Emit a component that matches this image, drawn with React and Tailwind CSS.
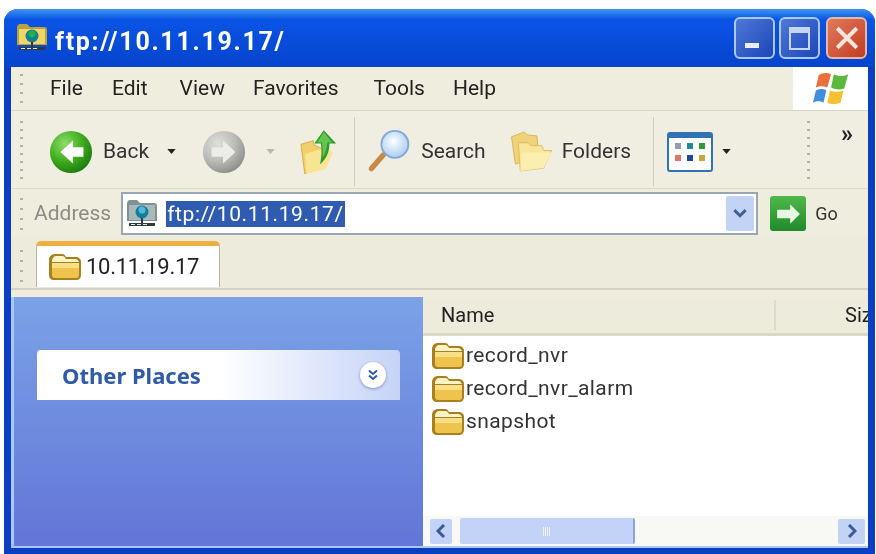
import React from "react";

const Grip = ({ className }) => (
  <div className={`flex flex-col justify-between w-[3px] ${className}`}>
    {[0, 1, 2, 3, 4, 5, 6, 7].map((i) => (
      <span key={i} className="block w-[3px] h-[2px] bg-[#b5b2a4]" />
    ))}
  </div>
);

const ShortGrip = ({ className }) => (
  <div className={`flex flex-col justify-between w-[3px] ${className}`}>
    {[0, 1, 2, 3].map((i) => (
      <span key={i} className="block w-[3px] h-[2px] bg-[#b5b2a4]" />
    ))}
  </div>
);

const Folder = ({ className }) => (
  <svg viewBox="0 0 32 28" className={className}>
    <path d="M0 7c0-4 3-6 6-6h7c2 0 3 1 4 3h9c4 0 6 2 6 5v13c0 3-2 5-5 5H5c-3 0-5-2-5-5z" fill="#a8801f" />
    <path d="M3 8c0-3 2-5 4-5h6c2 0 3 1 4 3h9c2 0 3 1 4 3H3z" fill="#fdf3c4" />
    <path d="M3 10h27v12c0 2-1 3-3 3H6c-2 0-3-1-3-3z" fill="#eec44e" />
    <path d="M3 10h27v5H3z" fill="#f8df86" />
  </svg>
);

const NetFolder = ({ className, gray }) => (
  <svg viewBox="0 0 32 32" className={className}>
    <path d="M1 6c0-2 1-4 3-4h7l3 3h14c2 0 3 1 3 3v15H1z" fill={gray ? "#7f9292" : "#b9a23c"} />
    <path d="M3 7h26v15H3z" fill={gray ? "#a9b9b9" : "#f0d765"} />
    <circle cx="16" cy="14" r="6.5" fill="#0f7f9a" />
    <circle cx="16" cy="12" r="3.5" fill={gray ? "#57b5e0" : "#25b04a"} />
    <path d="M15 20h2v5h-2z" fill="#334" />
    <path d="M3 25h26v3H3z" fill="#2f3c3a" />
    <path d="M5 26h4v1H5zm6 0h4v1h-4zm6 0h4v1h-4z" fill="#dfe6e6" />
  </svg>
);

const NavArrow = ({ green }) => (
  <svg viewBox="0 0 46 46" className="w-[44px] h-[44px]">
    <defs>
      <radialGradient id={green ? "gb" : "gf"} cx="35%" cy="30%" r="75%">
        <stop offset="0%" stopColor={green ? "#8fdc6a" : "#dededc"} />
        <stop offset="55%" stopColor={green ? "#3fae1e" : "#bcbcb8"} />
        <stop offset="100%" stopColor={green ? "#1c7a10" : "#8c8c88"} />
      </radialGradient>
    </defs>
    <circle cx="23" cy="23" r="22" fill={`url(#${green ? "gb" : "gf"})`} />
    {green ? (
      <path d="M25 11 12 23l13 12v-7h11V18H25z" fill="#fff" />
    ) : (
      <path d="M22 11 35 23 22 35v-7H10V18h12z" fill="#ecece8" />
    )}
  </svg>
);

const Caret = ({ className }) => (
  <svg viewBox="0 0 10 6" className={className}>
    <path d="M0 0h10L5 6z" fill="currentColor" />
  </svg>
);

const Search = () => (
  <svg viewBox="0 0 52 50" className="w-[47px] h-[45px]">
    <defs>
      <radialGradient id="lens" cx="45%" cy="40%" r="60%">
        <stop offset="0%" stopColor="#ffffff" />
        <stop offset="100%" stopColor="#a9cdf0" />
      </radialGradient>
    </defs>
    <path d="M6 44 19 29" stroke="#c98a45" strokeWidth="6" strokeLinecap="round" />
    <circle cx="32" cy="17" r="15" fill="url(#lens)" stroke="#7ea8d8" strokeWidth="2" />
  </svg>
);

const Folders = () => (
  <svg viewBox="0 0 44 42" className="w-[44px] h-[41px]">
    <path d="M1 6 14 1l3 3 10 1 2 20-24 9z" fill="#f0d27a" stroke="#d9b452" />
    <path d="M8 12h10l3 3h11l2 5h8L34 38 10 41z" fill="#f8e69a" stroke="#dcbc5c" />
    <path d="M12 22h30l-8 16-24 3z" fill="#fbeeb0" />
  </svg>
);

const UpFolder = () => (
  <svg viewBox="0 0 40 48" className="w-[38px] h-[46px]">
    <path d="M1 16 14 12v4l12 6v14L5 47z" fill="#f2cf68" stroke="#d4ad4a" />
    <path d="M5 26l20-6 10 4-8 18-20 5z" fill="#f8e594" />
    <path d="M25 1 38 15h-7c0 9-3 16-10 22 2-8 2-15 1-22h-7z" fill="#2e9b2a" />
    <path d="M25 3 34 14h-5c-1 6-2 11-5 16 0-6 0-11-1-16h-5z" fill="#63c44f" />
  </svg>
);

const Views = () => (
  <svg viewBox="0 0 46 40" className="w-[46px] h-[40px]">
    <rect x="1" y="1" width="44" height="38" rx="2" fill="#fdfdff" stroke="#2f73b4" strokeWidth="2" />
    <rect x="1" y="1" width="44" height="5" fill="#2f73b4" />
    <rect x="8" y="11" width="6" height="6" fill="#9a9aac" />
    <rect x="20" y="11" width="6" height="6" fill="#1f8a9a" />
    <rect x="32" y="11" width="6" height="6" fill="#2f9a3a" />
    <rect x="8" y="23" width="6" height="6" fill="#e0786a" />
    <rect x="20" y="23" width="6" height="6" fill="#1f4a9a" />
    <rect x="32" y="23" width="6" height="6" fill="#c9a83a" />
  </svg>
);

const Flag = () => (
  <svg viewBox="0 0 40 36" className="w-[38px] h-[35px]">
    <path d="M6 4c4-3 9-3 13-1l-4 14c-4-2-8-2-12 0z" fill="#e8703a" />
    <path d="M22 3c4 2 9 3 15 0l-4 15c-5 2-10 1-14-1z" fill="#5cb83c" />
    <path d="M3 20c4-2 8-2 11 0l-3 13c-4-2-7-2-11 0z" fill="#3f8fdc" />
    <path d="M18 20c4 2 9 2 14 0l-3 13c-5 2-10 2-14 0z" fill="#f2c230" />
  </svg>
);

export default function App() {
  return (
    <div className="w-[876px] h-[554px] bg-white pt-[9px] pl-[4px] pr-px overflow-hidden blur-[0.6px] font-['Roboto',sans-serif]">
      <div className="h-full flex flex-col rounded-t-[14px] bg-[#0a3fc4] px-[7px] pb-[6px]">
        {/* title bar */}
        <div className="h-[58px] -mx-[7px] shrink-0 rounded-t-[14px] bg-gradient-to-b from-[#3f94f2] via-[#0a54e6] via-[18%] to-[#0644cc] flex items-center pl-[12px] pr-[8px]">
          <NetFolder className="w-[32px] h-[32px]" />
          <span className="ml-[7px] mt-[6px] text-white font-bold text-[25px] tracking-[1.7px] leading-none">ftp://10.11.19.17/</span>
          <div className="ml-auto flex gap-[4px] items-center">
            <div className="w-[41px] h-[42px] rounded-[6px] border-2 border-[#a9c8f2] bg-gradient-to-br from-[#4f78d8] to-[#1d45b8] flex items-end pl-[9px] pb-[9px]">
              <span className="block w-[14px] h-[5px] bg-[#e8eefc]" />
            </div>
            <div className="w-[41px] h-[42px] rounded-[6px] border-2 border-[#a9c8f2] bg-gradient-to-br from-[#4f78d8] to-[#1d45b8] flex items-center justify-center">
              <span className="block w-[21px] h-[23px] border-2 border-t-[6px] border-[#c6d6f6]" />
            </div>
            <div className="ml-[2px] w-[41px] h-[42px] rounded-[6px] border-2 border-[#e6b8a8] bg-gradient-to-br from-[#e07a5c] to-[#c23a1e] flex items-center justify-center">
              <svg viewBox="0 0 24 24" className="w-[26px] h-[26px]">
                <path d="M3 3l18 18M21 3 3 21" stroke="#fbe6df" strokeWidth="3.6" />
              </svg>
            </div>
          </div>
        </div>

        {/* menu */}
        <div className="h-[44px] shrink-0 flex bg-[#efedde] border-b border-[#d8d5c4]">
          <ShortGrip className="ml-[9px] my-[7px]" />
          <div className="flex items-center text-[21px] text-[#222] pl-[27px] flex-1">
            <span>File</span>
            <span className="ml-[29px]">Edit</span>
            <span className="ml-[32px]">View</span>
            <span className="ml-[28px]">Favorites</span>
            <span className="ml-[35px]">Tools</span>
            <span className="ml-[28px]">Help</span>
          </div>
          <div className="w-[75px] bg-white flex items-center justify-center pl-[2px]">
            <Flag />
          </div>
        </div>

        {/* toolbar */}
        <div className="h-[78px] shrink-0 flex items-center bg-[#f0eee0] border-b border-[#dedbca] pt-[4px]">
          <Grip className="ml-[9px] h-[58px] -mt-[4px]" />
          <div className="ml-[26px]"><NavArrow green /></div>
          <span className="ml-[10px] text-[21px] text-[#333]">Back</span>
          <Caret className="ml-[18px] w-[9px] h-[5px] text-[#222]" />
          <div className="ml-[26px]"><NavArrow /></div>
          <Caret className="ml-[20px] w-[9px] h-[5px] text-[#b8b8b0]" />
          <div className="ml-[25px]"><UpFolder /></div>
          <div className="ml-[16px] w-px self-stretch my-[2px] bg-[#d0cdbc]" />
          <div className="ml-[11px]"><Search /></div>
          <span className="ml-[8px] text-[21px] text-[#333]">Search</span>
          <div className="ml-[24px]"><Folders /></div>
          <span className="ml-[8px] text-[21px] text-[#333]">Folders</span>
          <div className="ml-[22px] w-px self-stretch my-[2px] bg-[#d0cdbc]" />
          <div className="ml-[13px]"><Views /></div>
          <Caret className="ml-[9px] w-[9px] h-[5px] text-[#222]" />
          <Grip className="ml-[76px] h-[58px] -mt-[4px]" />
          <span className="ml-[31px] self-start mt-[7px] text-[24px] font-bold leading-none text-[#222]">»</span>
        </div>

        {/* address */}
        <div className="h-[47px] shrink-0 flex items-center bg-[#efedde] pt-[2px]">
          <ShortGrip className="ml-[9px] h-[32px]" />
          <span className="ml-[11px] text-[21px] text-[#8c8c84]">Address</span>
          <div className="ml-[10px] w-[637px] h-[43px] bg-white border-2 border-[#9aa6b4] flex items-center pl-[3px]">
            <NetFolder gray className="w-[32px] h-[32px]" />
            <span className="ml-[8px] h-[26px] bg-[#2f5cb0] text-white text-[21px] tracking-[0.6px] leading-[26px] px-[1px]">ftp://10.11.19.17/</span>
            <div className="ml-auto mr-[2px] w-[28px] h-[35px] rounded-[2px] bg-[#c3d3f5] flex items-center justify-center">
              <svg viewBox="0 0 12 8" className="w-[14px] h-[9px]">
                <path d="M1 1l5 5 5-5" fill="none" stroke="#3f5f8f" strokeWidth="2.6" />
              </svg>
            </div>
          </div>
          <div className="ml-[12px] w-[36px] h-[35px] rounded-[3px] bg-gradient-to-b from-[#4fb84a] to-[#1f8a2a] flex items-center justify-center">
            <svg viewBox="0 0 24 20" className="w-[26px] h-[22px]">
              <path d="M14 1l9 9-9 9v-5H2V6h12z" fill="#e8f6e4" />
            </svg>
          </div>
          <span className="ml-[9px] text-[18px] text-[#333]">Go</span>
        </div>

        {/* tab strip */}
        <div className="h-[54px] shrink-0 flex bg-[#edebdc] border-b-2 border-[#d6d3c2]">
          <ShortGrip className="ml-[9px] mt-[14px] h-[32px]" />
          <div className="ml-[13px] mt-[5px] w-[184px] h-[46px] rounded-t-[5px] bg-white border-x border-[#b8b5a4] border-t-[5px] border-t-[#f0b040] flex items-center pl-[12px]">
            <Folder className="w-[32px] h-[28px]" />
            <span className="ml-[5px] text-[22px] tracking-[-0.3px] text-[#222]">10.11.19.17</span>
          </div>
        </div>

        {/* content */}
        <div className="flex-1 min-h-0 flex flex-col bg-[#efedde] pt-[7px]">
          <div className="flex-1 min-h-0 flex border-b-2 border-[#a8c8f5]">
            <div className="w-[412px] shrink-0 border-l-[3px] border-[#a8c8f5] bg-gradient-to-b from-[#7ba2e7] to-[#6375d6] pl-[23px] pr-[23px] pt-[53px]">
              <div className="h-[50px] rounded-t-[4px] bg-gradient-to-r from-white via-white to-[#c6d3f7] flex items-center pl-[25px] pr-[14px]">
                <span className="text-[22px] font-bold text-[#2f5aa8] font-['Noto_Sans',sans-serif]">Other Places</span>
                <div className="ml-auto w-[26px] h-[26px] rounded-full bg-white shadow-[0_1px_3px_#7f8fc0] flex items-center justify-center">
                  <svg viewBox="0 0 12 12" className="w-[12px] h-[12px]">
                    <path d="M2 1.5l4 3.5 4-3.5M2 6.5l4 3.5 4-3.5" fill="none" stroke="#2f5aa8" strokeWidth="2" />
                  </svg>
                </div>
              </div>
            </div>
            <div className="flex-1 min-w-0 flex flex-col bg-white overflow-hidden">
              <div className="h-[39px] shrink-0 flex items-center bg-[#ecebdc] border-b-[3px] border-[#d9d7c6] text-[20px] text-[#222] whitespace-nowrap">
                <span className="ml-[18px] w-[333px] shrink-0">Name</span>
                <div className="w-[2px] h-[30px] shrink-0 bg-[#dcdacb]" />
                <span className="ml-[69px] shrink-0">Siz</span>
              </div>
              <div className="flex-1 pl-[9px] pt-[3px]">
                {["record_nvr", "record_nvr_alarm", "snapshot"].map((name) => (
                  <div key={name} className="h-[33px] flex items-center">
                    <Folder className="w-[32px] h-[28px]" />
                    <span className="ml-[2px] text-[21px] tracking-[0.4px] text-[#333]">{name}</span>
                  </div>
                ))}
              </div>
              <div className="h-[30px] shrink-0 flex items-center bg-[#f8f8f4] pl-[7px] pr-[3px]">
                <div className="w-[22px] h-[25px] rounded-[2px] bg-[#c3d3f5] flex items-center justify-center">
                  <svg viewBox="0 0 10 14" className="w-[10px] h-[14px]">
                    <path d="M8 1 2 7l6 6" fill="none" stroke="#3a5a9a" strokeWidth="3" />
                  </svg>
                </div>
                <div className="ml-[8px] w-[175px] h-[26px] rounded-[2px] bg-[#c3d3f7] border-r-2 border-[#8fa5d8] flex items-center justify-center gap-[1px]">
                  {[0, 1, 2, 3].map((i) => (
                    <span key={i} className="block w-px h-[9px] bg-[#eef2fc]" />
                  ))}
                </div>
                <div className="ml-auto w-[27px] h-[25px] rounded-[2px] bg-[#c3d3f5] flex items-center justify-center">
                  <svg viewBox="0 0 10 14" className="w-[10px] h-[14px]">
                    <path d="M2 1l6 6-6 6" fill="none" stroke="#3a5a9a" strokeWidth="3" />
                  </svg>
                </div>
              </div>
            </div>
          </div>
        </div>
      </div>
    </div>
  );
}
